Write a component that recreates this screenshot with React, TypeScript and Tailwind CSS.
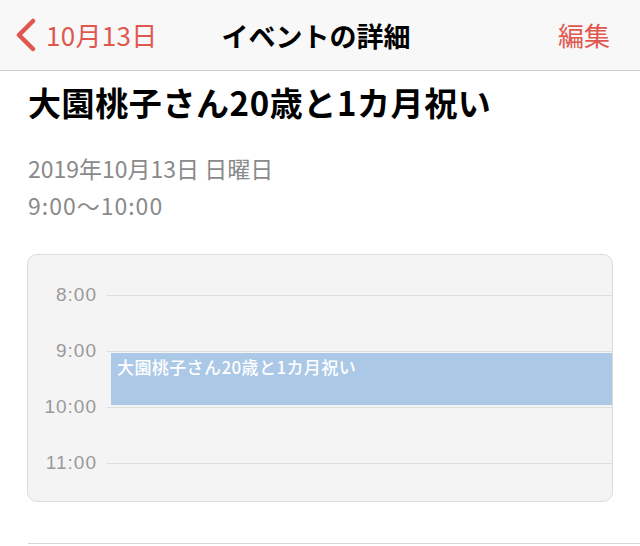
import React from 'react';

const jp = { fontFamily: '"Noto Sans CJK JP", "Noto Sans", sans-serif' };
const num = { fontFamily: '"Liberation Sans", "Noto Sans CJK JP", sans-serif' };

const hours = ['8:00', '9:00', '10:00', '11:00'];

export default function App() {
  return (
    <div className="w-[640px] h-[546px] bg-white overflow-hidden" style={jp}>
      {/* nav bar */}
      <div className="h-[71px] bg-[#f8f8f8] border-b border-[#d0d0d0] flex items-center px-[14px]">
        <div className="flex items-center w-[200px] text-[#e0574f]">
          <svg width="24" height="34" viewBox="0 0 24 34" className="mr-[8px]">
            <path d="M19 3 L5 17 L19 31" fill="none" stroke="#e0574f" strokeWidth="4.5" strokeLinecap="round" strokeLinejoin="round" />
          </svg>
          <span className="text-[26px] leading-none tracking-[0.3px]">10月13日</span>
        </div>
        <div className="flex-1 text-center text-[27px] font-bold text-black leading-none pr-[8px]">イベントの詳細</div>
        <div className="w-[200px] text-right text-[26px] text-[#e0574f] leading-none pr-[16px]">編集</div>
      </div>

      {/* details */}
      <div className="px-[28px]">
        <h1 className="mt-[11px] text-[33px] font-bold text-black leading-[40px] tracking-[0.6px]">大園桃子さん20歳と1カ月祝い</h1>
        <div className="mt-[28px] text-[23px] text-[#8a8a8a] leading-[37px]">
          <div>2019年10月13日 日曜日</div>
          <div className="tracking-[1px]">9:00〜10:00</div>
        </div>
      </div>

      {/* day preview */}
      <div className="ml-[27px] mr-[27px] mt-[30px] bg-[#f4f4f4] border border-[#dcdcdc] rounded-[10px] pt-[12px] pb-[10px]">
        <div className="relative">
          {hours.map((h) => (
            <div key={h} className="h-[56px] flex items-center">
              <div className="w-[69px] text-right text-[19px] tracking-[1px] text-[#9a9a9a]" style={num}>{h}</div>
              <div className="flex-1 ml-[10px] h-px bg-[#dedede]" />
            </div>
          ))}
          <div className="absolute left-[83px] right-0 top-[86px] h-[52px] bg-[#abc8e6] px-[6px] pt-[1px]">
            <span className="text-[17px] font-medium text-white tracking-[0.4px]">大園桃子さん20歳と1カ月祝い</span>
          </div>
        </div>
      </div>

      <div className="ml-[28px] mt-[41px] h-px bg-[#d6d6d6]" />
    </div>
  );
}
